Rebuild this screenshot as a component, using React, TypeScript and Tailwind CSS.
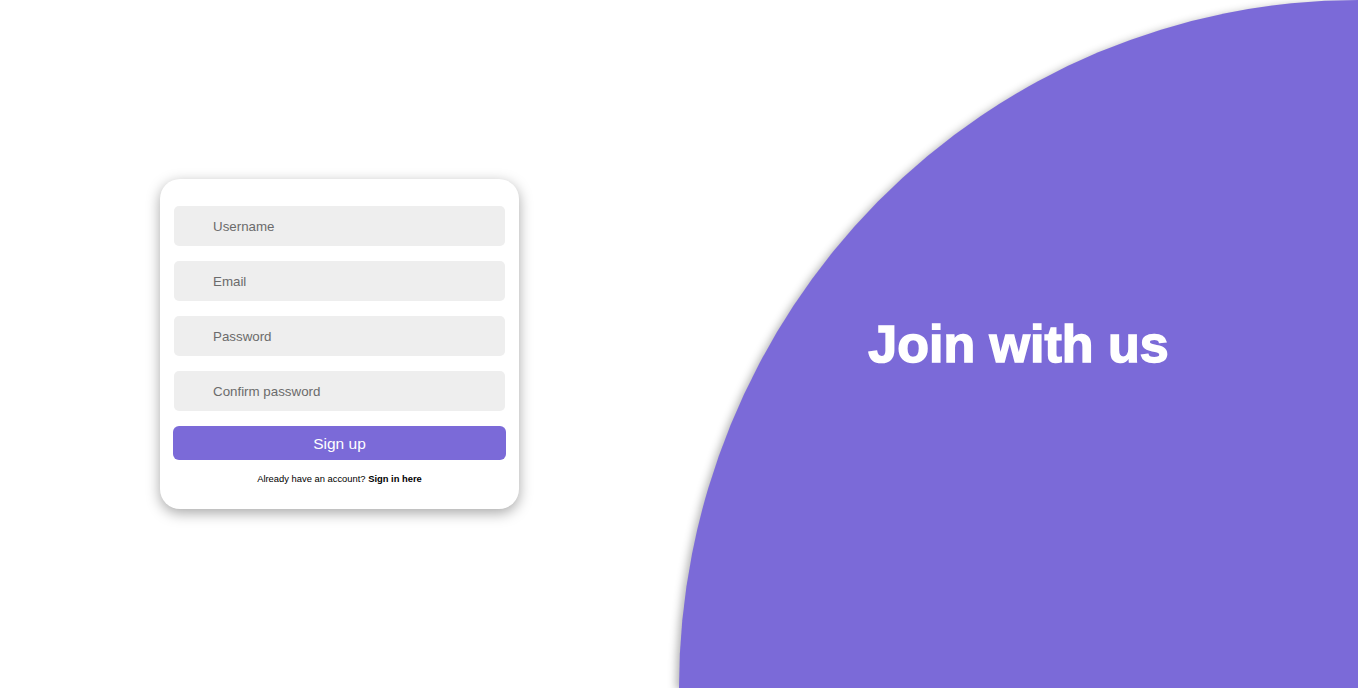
import React from "react";

const fields = ["Username", "Email", "Password", "Confirm password"];

const SignUpCard = () => {
  return (
    <div className="w-[359px] rounded-[20px] bg-white px-[14px] pt-[27px] pb-[22px] shadow-[0_4px_14px_rgba(0,0,0,0.35)]">
      <form className="flex flex-col" onSubmit={(e) => e.preventDefault()}>
        {fields.map((label) => (
          <input
            key={label}
            type={label.toLowerCase().includes("password") ? "password" : "text"}
            placeholder={label}
            className="mb-[15px] h-[40px] w-full rounded-[5px] bg-[#eeeeee] pl-[39px] text-[13.33px] text-[#333] outline-none placeholder:text-[#6b6b6b]"
          />
        ))}
        <button
          type="submit"
          className="-mx-px h-[34px] rounded-[6px] bg-[#7b6ad8] text-[15.5px] text-white"
        >
          Sign up
        </button>
      </form>
      <p className="mt-[12px] text-center text-[9.4px] text-black">
        Already have an account? <a href="#" className="font-bold">Sign in here</a>
      </p>
    </div>
  );
};

const App = () => {
  return (
    <div className="flex h-[688px] w-full overflow-hidden bg-white font-['Liberation_Sans',Arial,sans-serif]">
      <div className="flex w-1/2 items-center justify-center">
        <SignUpCard />
      </div>
      <div className="flex w-1/2 items-center justify-center rounded-tl-[100%] bg-[#7b6ad8] shadow-[-3px_2px_8px_rgba(0,0,0,0.3)]">
        <h1 className="text-[52px] font-bold leading-none text-white [-webkit-text-stroke:1.5px_white]">
          Join with us
        </h1>
      </div>
    </div>
  );
};

export default App;
